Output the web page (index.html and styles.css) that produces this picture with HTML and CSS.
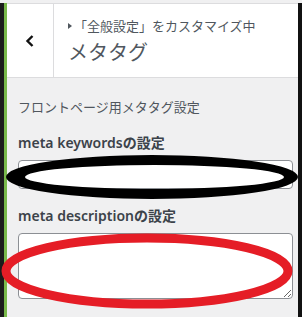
FILE: index.html
```html
<!DOCTYPE html>
<html lang="ja">

  <head>
    <meta charset="UTF-8">
    <meta name="viewport" content="width=device-width, initial-scale=1.0">
    <title>メタタグ</title>
    <link rel="stylesheet" href="styles.css">
  </head>

  <body>
    <div class="frame">
      <div class="panel">
        <!-- ヘッダー -->
        <div class="head">
          <div class="back">
            <svg width="12" height="14" viewBox="0 0 12 14">
              <path d="M8.5 2 L3.5 7 L8.5 12" fill="none" stroke="#111" stroke-width="2.4" />
            </svg>
          </div>
          <div class="title">
            <div class="crumb"><span class="tri"></span>「全般設定」をカスタマイズ中</div>
            <div class="name">メタタグ</div>
          </div>
        </div>

        <!-- 設定エリア -->
        <div class="body">
          <p class="desc">フロントページ用メタタグ設定</p>

          <label class="label">meta keywordsの設定</label>
          <input class="field" type="text">

          <label class="label">meta descriptionの設定</label>
          <textarea class="area"></textarea>
        </div>

        <!-- 手書きのマーク -->
        <svg class="mark mark_black" width="296" height="50" viewBox="0 0 296 50">
          <path d="M0 24 a146 22 0 1 0 292 0 a146 22 0 1 0 -292 0 Z M19 24 a129.5 12 0 1 0 259 0 a129.5 12 0 1 0 -259 0 Z" fill="#000" fill-rule="evenodd" />
        </svg>
        <svg class="mark mark_red" width="294" height="78" viewBox="0 0 294 78">
          <ellipse cx="146" cy="39" rx="141" ry="33" fill="none" stroke="#e51d26" stroke-width="9" />
        </svg>
      </div>
    </div>
  </body>

</html>
```

FILE: styles.css
```css
* {
  margin: 0;
  padding: 0;
  box-sizing: border-box;
}

body {
  width: 302px;
  height: 317px;
  overflow: hidden;
  font-family: "Noto Sans", "Noto Sans CJK JP", sans-serif;
  color: #50575e;
  background-color: #f0f0f1;
}

.frame {
  height: 317px;
  border-left: 4px solid #1b1b1b;
  border-right: 4px solid #111;
}

.panel {
  position: relative;
  height: 100%;
  border-left: 3px solid #79b94a;
  background-color: #f0f0f1;
}

.head {
  display: flex;
  height: 75px;
  margin-top: 3px;
  border-top: 1px solid #dcdcde;
  border-bottom: 1px solid #dcdcde;
  background-color: #fff;
}

.back {
  display: flex;
  align-items: center;
  justify-content: center;
  width: 47px;
  border-right: 1px solid #dcdcde;
}

.title {
  padding: 13px 0 0 14px;
}

.crumb {
  display: flex;
  align-items: center;
  font-size: 13px;
  line-height: 18px;
  color: #50575e;
}

.tri {
  width: 0;
  height: 0;
  margin-right: 2px;
  border-left: 4px solid #50575e;
  border-top: 3px solid transparent;
  border-bottom: 3px solid transparent;
}

.name {
  margin-top: 5px;
  font-size: 20px;
  line-height: 26px;
  color: #50575e;
}

.body {
  display: flex;
  flex-direction: column;
  padding: 20px 6px 0 11px;
}

.desc {
  font-size: 13px;
  line-height: 18px;
}

.label {
  margin-top: 17px;
  font-size: 14px;
  font-weight: 600;
  line-height: 20px;
  color: #3c434a;
}

.field,
.area {
  width: 275px;
  margin-top: 7px;
  border: 1px solid #8c8f94;
  border-radius: 4px;
  background-color: #fff;
}

.field {
  height: 29px;
}

.area {
  height: 66px;
  resize: vertical;
}

.mark {
  position: absolute;
}

.mark_black {
  left: -1px;
  top: 150px;
}

.mark_red {
  left: -6px;
  top: 229px;
}
```
